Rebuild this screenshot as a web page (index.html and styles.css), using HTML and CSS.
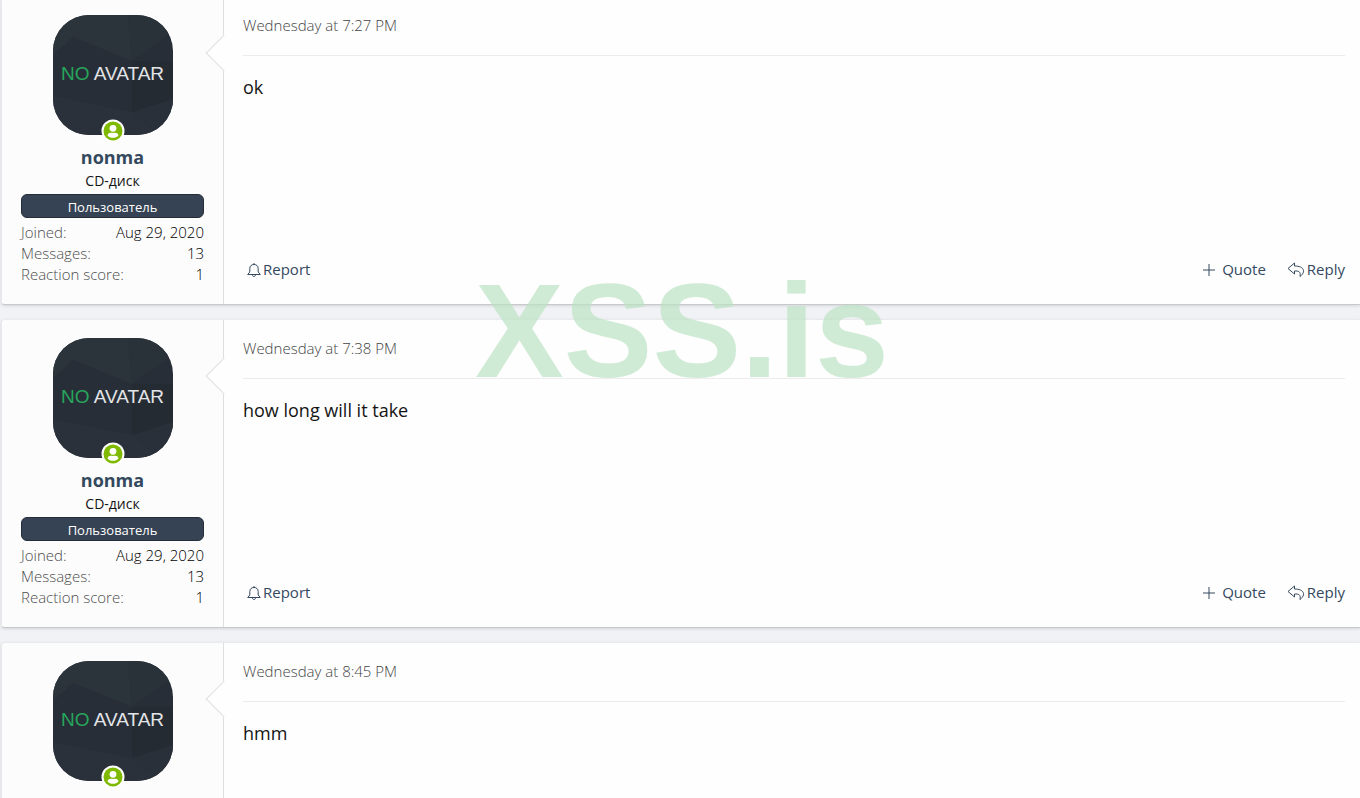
FILE: index.html
```html
<!DOCTYPE html>
<html lang="en">
<head>
  <meta charset="UTF-8">
  <meta name="viewport" content="width=device-width, initial-scale=1.0">
  <title>Thread</title>
  <link rel="stylesheet" href="styles.css">
</head>
<body>
  <svg class="sprite" aria-hidden="true">
    <symbol id="no-avatar" viewBox="0 0 120 120">
      <rect width="120" height="120" fill="#272e37"/>
      <path d="M0 0H75L79 46L20 22L0 40Z" fill="#2b333b"/>
      <path d="M75 0H120V17L79 46Z" fill="#293139"/>
      <path d="M79 46L120 46V90L79 97Z" fill="#242b33"/>
      <path d="M0 81L79 97L107 120H0Z" fill="#2b313b"/>
      <path d="M79 97L120 84V120H107Z" fill="#293039"/>
    </symbol>
    <symbol id="online" viewBox="0 0 24 24">
      <circle cx="12" cy="12" r="11.500" fill="#fff"/>
      <circle cx="12" cy="12" r="9.500" fill="#7fb900"/>
      <circle cx="12" cy="9.300" r="3.400" fill="#fff"/>
      <path d="M6.500 16.500C7 13.600 9.500 13.500 12 14C14.500 13.500 17 13.600 17.500 16.500C15 19.600 9 19.600 6.500 16.500Z" fill="#fff"/>
    </symbol>
    <symbol id="bell" viewBox="0 0 14 16">
      <path d="M7 1V2.500M2.800 10V6.500C2.800 4 4.500 2.500 7 2.500S11.200 4 11.200 6.500V10L13.300 12.500H0.700ZM5.500 13C5.500 15 8.500 15 8.500 13"/>
    </symbol>
    <symbol id="plus" viewBox="0 0 14 16">
      <path d="M7 2V14M1 8H13"/>
    </symbol>
    <symbol id="reply" viewBox="0 0 18 16">
      <path d="M7.500 1L1 6.500L7.500 12V9C11.500 8.800 14 9.500 13 14.500C19 10 17.500 4 7.500 4Z"/>
    </symbol>
  </svg>

  <main class="thread">
    <article class="message">
      <section class="message-user">
        <div class="avatar">
          <svg class="avatar-img" aria-hidden="true"><use href="#no-avatar"/></svg>
          <span class="avatar-text"><span class="green">NO</span> AVATAR</span>
          <svg class="avatar-online" aria-hidden="true"><use href="#online"/></svg>
        </div>
        <h4 class="user-name"><a href="#">nonma</a></h4>
        <div class="user-title">CD-диск</div>
        <div class="user-banner">Пользователь</div>
        <dl class="user-extras">
          <div class="pair"><dt>Joined:</dt><dd>Aug 29, 2020</dd></div>
          <div class="pair"><dt>Messages:</dt><dd>13</dd></div>
          <div class="pair"><dt>Reaction score:</dt><dd>1</dd></div>
        </dl>
      </section>
      <section class="message-main">
        <header class="message-date"><a href="#">Wednesday at 7:27 PM</a></header>
        <div class="message-body">ok</div>
        <footer class="message-actions">
          <a class="action" href="#"><svg class="icon"><use href="#bell"/></svg>Report</a>
          <div class="actions-right">
            <a class="action action-quote" href="#"><svg class="icon"><use href="#plus"/></svg>Quote</a>
            <a class="action" href="#"><svg class="icon icon-reply"><use href="#reply"/></svg>Reply</a>
          </div>
        </footer>
      </section>
    </article>

    <article class="message">
      <section class="message-user">
        <div class="avatar">
          <svg class="avatar-img" aria-hidden="true"><use href="#no-avatar"/></svg>
          <span class="avatar-text"><span class="green">NO</span> AVATAR</span>
          <svg class="avatar-online" aria-hidden="true"><use href="#online"/></svg>
        </div>
        <h4 class="user-name"><a href="#">nonma</a></h4>
        <div class="user-title">CD-диск</div>
        <div class="user-banner">Пользователь</div>
        <dl class="user-extras">
          <div class="pair"><dt>Joined:</dt><dd>Aug 29, 2020</dd></div>
          <div class="pair"><dt>Messages:</dt><dd>13</dd></div>
          <div class="pair"><dt>Reaction score:</dt><dd>1</dd></div>
        </dl>
      </section>
      <section class="message-main">
        <header class="message-date"><a href="#">Wednesday at 7:38 PM</a></header>
        <div class="message-body">how long will it take</div>
        <footer class="message-actions">
          <a class="action" href="#"><svg class="icon"><use href="#bell"/></svg>Report</a>
          <div class="actions-right">
            <a class="action action-quote" href="#"><svg class="icon"><use href="#plus"/></svg>Quote</a>
            <a class="action" href="#"><svg class="icon icon-reply"><use href="#reply"/></svg>Reply</a>
          </div>
        </footer>
      </section>
    </article>

    <article class="message">
      <section class="message-user">
        <div class="avatar">
          <svg class="avatar-img" aria-hidden="true"><use href="#no-avatar"/></svg>
          <span class="avatar-text"><span class="green">NO</span> AVATAR</span>
          <svg class="avatar-online" aria-hidden="true"><use href="#online"/></svg>
        </div>
      </section>
      <section class="message-main">
        <header class="message-date"><a href="#">Wednesday at 8:45 PM</a></header>
        <div class="message-body">hmm</div>
      </section>
    </article>

    <div class="watermark">XSS.is</div>
  </main>
</body>
</html>
```

FILE: styles.css
```css
* {
  box-sizing: border-box;
}

body {
  margin: 0;
  background-color: #f0f2f6;
  color: #141414;
  font-family: 'Segoe UI', 'Open Sans', 'Noto Sans', sans-serif;
  font-size: 15px;
  line-height: 21px;
}

a {
  color: inherit;
  text-decoration: none;
}

a:hover {
  text-decoration: underline;
}

.sprite {
  position: absolute;
  width: 0;
  height: 0;
}

.thread {
  position: relative;
  display: flex;
  flex-direction: column;
  gap: 14px;
  height: 100vh;
  padding-left: 1px;
  overflow: hidden;
}

.message {
  display: flex;
  flex-shrink: 0;
  background-color: #fefefe;
  border: 1px solid #e9eaec;
  border-right: none;
  border-bottom-color: #c8c9ca;
  border-radius: 4px 0 0 4px;
  box-shadow: 0 1px 3px rgba(0, 0, 0, 0.12);
}

/* the thread is scrolled a little past the top of the first post */
.message:first-child {
  margin-top: -4px;
}

.message-user {
  position: relative;
  flex: 0 0 222px;
  padding: 18px 19px 19px;
  background-color: #fcfcfc;
  border-right: 1px solid #dfdfdf;
  border-radius: 4px 0 0 4px;
  text-align: center;
}

/* arrow pointing at the avatar */
.message-user::after {
  content: '';
  position: absolute;
  top: 43px;
  right: -14px;
  width: 25px;
  height: 25px;
  background-color: #fefefe;
  border-left: 1px solid #dfdfdf;
  border-bottom: 1px solid #dfdfdf;
  transform: rotate(45deg);
}

.avatar {
  position: relative;
  width: 120px;
  height: 120px;
  margin: 0 auto 10px;
}

.avatar-img {
  display: block;
  width: 120px;
  height: 120px;
  border-radius: 36px;
}

.avatar-text {
  position: absolute;
  top: 0;
  left: 0;
  width: 100%;
  color: #e4e5e7;
  font-family: 'Liberation Sans', Arial, sans-serif;
  font-size: 19px;
  line-height: 118px;
  white-space: nowrap;
}

.green {
  color: #27a55c;
}

.avatar-online {
  position: absolute;
  left: 48px;
  bottom: -8px;
  width: 24px;
  height: 24px;
}

.user-name {
  margin: 0;
  color: #34495e;
  font-size: 18px;
  font-weight: 700;
  line-height: 25px;
}

.user-title {
  margin-bottom: 3px;
  font-size: 14px;
}

.user-banner {
  height: 24px;
  margin-bottom: 4px;
  background-color: #364354;
  border: 1px solid #242d38;
  border-radius: 6px;
  color: #fff;
  font-size: 13px;
  line-height: 24px;
}

.user-extras {
  margin: 0;
  font-weight: 300;
}

.pair {
  display: flex;
  justify-content: space-between;
}

.pair dt {
  color: #4c4c4c;
}

.pair dd {
  margin: 0;
  color: #000;
}

.message-main {
  display: flex;
  flex: 1;
  flex-direction: column;
  padding: 18px 15px 24px 19px;
}

.message-date {
  height: 41px;
  border-bottom: 1px solid #ececec;
  color: #444;
  font-weight: 300;
}

.message-body {
  flex: 1;
  min-height: 170px;
  padding-top: 18px;
  font-size: 18px;
  line-height: 26px;
}

.message-actions,
.actions-right {
  display: flex;
  justify-content: space-between;
}

.message-actions {
  padding-left: 4px;
  color: #34495e;
}

.actions-right {
  gap: 21px;
}

.action {
  display: flex;
  align-items: center;
  gap: 2px;
}

.action-quote {
  gap: 6px;
}

.icon {
  width: 14px;
  height: 16px;
  fill: none;
  stroke: currentColor;
  stroke-width: 1;
  stroke-linejoin: round;
}

.icon-reply {
  width: 18px;
}

.watermark {
  position: absolute;
  top: 265px;
  left: 50%;
  margin-left: 2px;
  transform: translateX(-50%);
  color: rgba(188, 227, 195, 0.7);
  font-family: 'Liberation Sans', Arial, sans-serif;
  font-size: 133px;
  font-weight: 700;
  line-height: 133px;
  pointer-events: none;
}
```
